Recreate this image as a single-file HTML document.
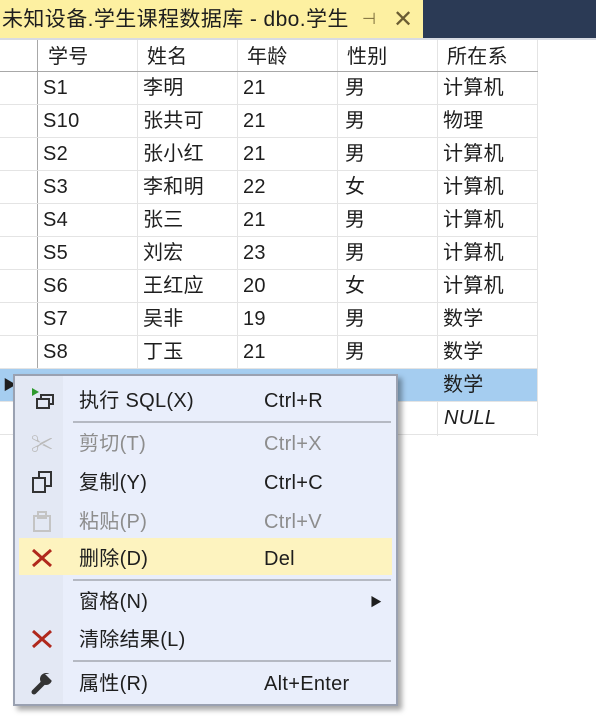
<!DOCTYPE html>
<html><head><meta charset="utf-8"><style>
*{margin:0;padding:0;box-sizing:border-box}
body{width:596px;height:721px;background:#fff;position:relative;overflow:hidden;font-family:"Liberation Sans","Noto Sans CJK SC",sans-serif;color:#1e1e1e}
.tab{position:absolute;left:0;top:0;width:423px;height:38px;background:#fdf0a1;font-size:21px;line-height:40px;padding-left:2px;white-space:nowrap;letter-spacing:0.4px}
.dark{position:absolute;left:423px;top:0;width:173px;height:38px;background:#2b3a55}
.tline{position:absolute;left:0;top:38px;width:596px;height:2px;background:#d8dbe3}
.c{position:absolute;font-size:20px;line-height:37px;white-space:nowrap;letter-spacing:0.3px}
.vl{position:absolute;width:1px;background:#e4e4e4}
.hl{position:absolute;height:1px;background:#e4e4e4}
.menu{position:absolute;left:13px;top:374px;width:385px;height:332px;background:#e9eefb;border:2px solid #9aa1b1;box-shadow:4px 4px 5px rgba(0,0,0,.35)}
.icol{position:absolute;left:0;top:0;width:48px;height:100%;background:#e3e8f4}
.mi{position:absolute;left:0;width:381px;height:37px;font-size:20px;line-height:41px;letter-spacing:0.3px}
.mi .t{position:absolute;left:64px}
.mi .k{position:absolute;left:249px}
.dis{color:#8d8d8d}
.sep{position:absolute;left:58px;width:318px;height:2px;background:#b5b9c3}
</style></head><body>
<div class="tab">未知设备.学生课程数据库 - dbo.学生 <span style="position:absolute;left:362px;top:0;color:#7a6a3a;font-size:16px">⊣</span><span style="position:absolute;left:393px;top:0;color:#6b5d33;font-size:24px">✕</span></div>
<div class="dark"></div>
<div class="tline"></div>
<div class="vl" style="left:37px;top:40px;height:396px;background:#a8a8a8"></div>
<div class="vl" style="left:137px;top:40px;height:396px"></div>
<div class="vl" style="left:237px;top:40px;height:396px"></div>
<div class="vl" style="left:337px;top:40px;height:396px"></div>
<div class="vl" style="left:437px;top:40px;height:396px"></div>
<div class="vl" style="left:537px;top:40px;height:396px"></div>
<div class="hl" style="left:0;top:71px;width:538px;background:#a8a8a8"></div>
<div style="position:absolute;left:0;top:369px;width:537px;height:33px;background:#a5cdf0"></div>
<div id="g"></div>
<div class="c" style="left:48px;top:39px">学号</div><div class="c" style="left:147px;top:39px">姓名</div><div class="c" style="left:247px;top:39px">年龄</div><div class="c" style="left:347px;top:39px">性别</div><div class="c" style="left:447px;top:39px">所在系</div>
<script>
var d=[["S1","李明","21","男","计算机"],["S10","张共可","21","男","物理"],["S2","张小红","21","男","计算机"],["S3","李和明","22","女","计算机"],["S4","张三","21","男","计算机"],["S5","刘宏","23","男","计算机"],["S6","王红应","20","女","计算机"],["S7","吴非","19","男","数学"],["S8","丁玉","21","男","数学"],["","","","","数学"]];
var h="",xs=[43,143,243,345,443];
for(var i=0;i<d.length;i++){var y=70+i*33;h+='<div class="hl" style="left:0;top:'+(y+34)+'px;width:538px"></div>';for(var j=0;j<5;j++)h+='<div class="c" style="left:'+xs[j]+'px;top:'+y+'px">'+d[i][j]+'</div>';}
h+='<div class="hl" style="left:0;top:434px;width:538px"></div><div class="c" style="left:444px;top:400px;font-style:italic">NULL</div>';
document.getElementById("g").innerHTML=h;
</script>
<div class="c" style="left:3px;top:367px;font-size:14px">▶</div>
<div class="menu">
<div class="icol"></div>
<div class="mi" style="top:5px"><svg style="position:absolute;left:15px;top:6px" width="26" height="26"><polygon points="2,1 9,5 2,9" fill="#2e9a2e"/><rect x="11" y="8" width="12" height="9" fill="none" stroke="#333" stroke-width="2"/><rect x="7" y="12" width="12" height="9" fill="#e3e8f4" stroke="#333" stroke-width="2"/></svg><span class="t">执行 SQL(X)</span><span class="k">Ctrl+R</span></div>
<div class="sep" style="top:45px"></div>
<div class="mi dis" style="top:48px"><span style="position:absolute;left:16px;top:0;color:#bbb;font-size:22px">✂</span><span class="t">剪切(T)</span><span class="k">Ctrl+X</span></div>
<div class="mi" style="top:87px"><svg style="position:absolute;left:16px;top:7px" width="24" height="24"><rect x="8" y="2" width="12" height="14" fill="none" stroke="#333" stroke-width="2"/><rect x="2" y="8" width="12" height="14" fill="#e3e8f4" stroke="#333" stroke-width="2"/></svg><span class="t">复制(Y)</span><span class="k">Ctrl+C</span></div>
<div class="mi dis" style="top:126px"><svg style="position:absolute;left:16px;top:7px" width="24" height="24"><rect x="3" y="7" width="16" height="15" fill="none" stroke="#c4c4c4" stroke-width="2"/><rect x="7" y="3" width="8" height="6" fill="none" stroke="#c4c4c4" stroke-width="2"/></svg><span class="t">粘贴(P)</span><span class="k">Ctrl+V</span></div>
<div class="mi" style="top:162px;left:4px;width:373px;background:#fdf3bf"></div>
<div class="mi" style="top:163px"><svg style="position:absolute;left:15px;top:8px" width="24" height="22"><path d="M3 3 L21 19 M21 3 L3 19" stroke="#b0281c" stroke-width="3"/></svg><span class="t">删除(D)</span><span class="k">Del</span></div>
<div class="sep" style="top:203px"></div>
<div class="mi" style="top:206px"><span class="t">窗格(N)</span><span style="position:absolute;left:355px;font-size:12px">▶</span></div>
<div class="mi" style="top:244px"><svg style="position:absolute;left:15px;top:8px" width="24" height="22"><path d="M3 3 L21 19 M21 3 L3 19" stroke="#b0281c" stroke-width="3"/></svg><span class="t">清除结果(L)</span></div>
<div class="sep" style="top:284px"></div>
<div class="mi" style="top:288px"><svg style="position:absolute;left:15px;top:7px" width="24" height="24"><path d="M4 21 L13 12" stroke="#333" stroke-width="5" stroke-linecap="round"/><circle cx="16" cy="8" r="6" fill="#333"/><path d="M15 3 L22 3 L22 10 Z" fill="#e3e8f4"/></svg><span class="t">属性(R)</span><span class="k">Alt+Enter</span></div>
</div>
</body></html>
